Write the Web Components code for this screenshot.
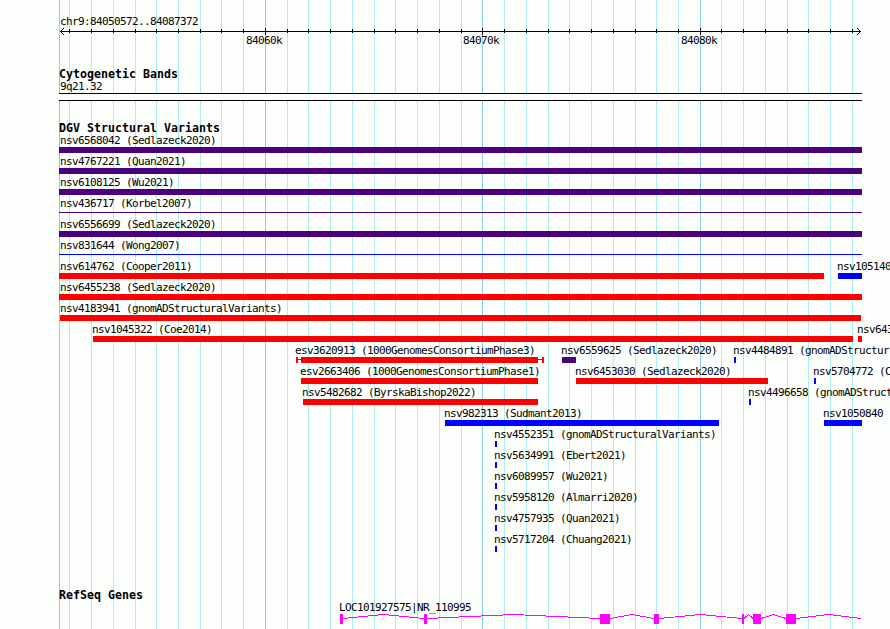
<!DOCTYPE html>
<html lang="en">
<head>
<meta charset="utf-8">
<title>chr9:84050572..84087372</title>
<style>
    body {
        margin: 0;
        background: #fdfffc;
        overflow: hidden;
    }
</style>
</head>
<body>
<genome-view>
    <genome-ruler slot="ruler" region="chr9:84050572..84087372"></genome-ruler>
    <genome-track heading="Cytogenetic Bands" style="height: 54px">
        <cyto-band name="9q21.32"></cyto-band>
    </genome-track>
    <genome-track id="variants" heading="DGV Structural Variants" style="height: 467px"></genome-track>
    <genome-track heading="RefSeq Genes">
        <gene-model name="LOC101927575|NR_110995"></gene-model>
    </genome-track>
</genome-view>
<script>
const LABEL_STYLE = `
    font: 11px/14px "DejaVu Sans Mono", "Liberation Mono", monospace;
    letter-spacing: -0.623px;
    white-space: nowrap;
    color: #000;
`;
const COLORS = { indigo: "#4b0082", red: "#ff0000", blue: "#0000ff" };
const MAJOR = [265, 482, 700];
const MINOR = [
    69, 91, 113, 135, 156, 178, 200, 221, 243, 287, 308, 330, 352, 374, 395,
    417, 439, 461, 504, 526, 548, 569, 591, 613, 635, 656, 678, 721, 743, 765,
    787, 808, 830, 852,
];

class GenomeView extends HTMLElement {
    constructor() {
        super();
        const line = (x, color) =>
            `<rect x="${x}" y="0" width="1" height="629" fill="${color}"/>`;
        this.attachShadow({ mode: "open" }).innerHTML = `
        <style>
            :host {
                display: grid;
                width: 890px;
                height: 629px;
                overflow: hidden;
            }
            svg, .tracks { grid-area: 1 / 1; }
            .tracks { display: flex; flex-direction: column; min-width: 0; z-index: 1; }
        </style>
        <svg width="890" height="629" shape-rendering="crispEdges">
            ${MINOR.map((x) => line(x, "#afeeee")).join("")}
            ${[59, ...MAJOR].map((x) => line(x, "#87ceeb")).join("")}
        </svg>
        <div class="tracks"><slot name="ruler"></slot><slot></slot></div>`;
    }
}

class GenomeRuler extends HTMLElement {
    connectedCallback() {
        const tick = (x, y, h) => `<rect x="${x}" y="${y}" width="1" height="${h}"/>`;
        this.attachShadow({ mode: "open" }).innerHTML = `
        <style>
            :host { display: flex; flex-direction: column; height: 67px; padding-top: 1px; box-sizing: border-box; ${LABEL_STYLE} }
            .region { padding: 14px 0 0 60px; height: 12px; }
            svg { display: block; height: 8px; flex: none; }
            .scale { display: grid; height: 12px; line-height: 12px; }
            .scale span { grid-area: 1 / 1; }
        </style>
        <div class="region">${this.getAttribute("region")}</div>
        <svg width="890" height="8" viewBox="0 27 890 8" shape-rendering="crispEdges">
            <rect x="60" y="31" width="801" height="1"/>
            ${MINOR.map((x) => tick(x, 29, 4)).join("")}
            ${MAJOR.map((x) => tick(x, 28, 7)).join("")}
            <path d="M60 31h1v1h-1zM61 30h1v3h-1zM62 29h1v1h-1zM62 33h1v1h-1zM63 28h1v1h-1zM63 34h1v1h-1z"/>
            <path d="M860 31h1v1h-1zM859 30h1v3h-1zM858 29h1v1h-1zM858 33h1v1h-1zM857 28h1v1h-1zM857 34h1v1h-1z"/>
        </svg>
        <div class="scale">
            ${["84060k", "84070k", "84080k"]
                .map((t, i) => `<span style="margin-left: ${[246, 463, 681][i]}px">${t}</span>`)
                .join("")}
        </div>`;
    }
}

class GenomeTrack extends HTMLElement {
    connectedCallback() {
        this.attachShadow({ mode: "open" }).innerHTML = `
        <style>
            :host { display: block; flex: none; }
            h2 {
                margin: 0;
                padding: 1px 0 0 59px;
                height: 12px;
                font: bold 11.6px/12px "DejaVu Sans Mono", "Liberation Mono", monospace;
                letter-spacing: 0.016px;
                white-space: nowrap;
            }
        </style>
        <h2>${this.getAttribute("heading")}</h2>
        <slot></slot>`;
    }
}

class CytoBand extends HTMLElement {
    connectedCallback() {
        this.attachShadow({ mode: "open" }).innerHTML = `
        <style>
            :host { display: block; ${LABEL_STYLE} }
            .name { padding-left: 60px; height: 13px; }
            .band {
                margin-left: 59px;
                width: 803px;
                height: 8px;
                box-sizing: border-box;
                border: solid #000;
                border-width: 1px 0;
                background: #fdfffc;
            }
        </style>
        <div class="name">${this.getAttribute("name")}</div>
        <div class="band"></div>`;
    }
}

class VariantRow extends HTMLElement {
    constructor() {
        super();
        this.attachShadow({ mode: "open" }).innerHTML = `
        <style>:host { display: grid; height: 21px; grid-template-columns: 890px; }</style>
        <slot></slot>`;
    }
}

class VariantFeature extends HTMLElement {
    connectedCallback() {
        const start = +this.getAttribute("start");
        const end = +this.getAttribute("end");
        const labelX = +this.getAttribute("label-x");
        const kind = this.getAttribute("kind");
        this.attachShadow({ mode: "open" }).innerHTML = `
        <style>
            :host { display: block; grid-area: 1 / 1; ${LABEL_STYLE} }
            .name { margin-left: ${labelX}px; height: 13px; }
            .glyph {
                display: flex;
                align-items: center;
                margin-left: ${start}px;
                width: ${end - start}px;
                height: 6px;
                color: ${COLORS[this.getAttribute("color")]};
            }
            .bar { flex: 1; height: 6px; background: currentColor; }
            .thin .bar { height: 1px; margin-bottom: 1px; }
            .cap { width: 2px; height: 6px; background: currentColor; }
            .stem { height: 1px; width: 3px; margin-bottom: 1px; background: currentColor; }
            .stem.right { width: 4px; }
        </style>
        <div class="name">${this.getAttribute("name")}</div>
        <div class="glyph ${kind}">
            ${kind === "range" ? '<i class="cap"></i><i class="stem"></i>' : ""}
            <i class="bar"></i>
            ${kind === "range" ? '<i class="stem right"></i><i class="cap"></i>' : ""}
        </div>`;
    }
}

class GeneModel extends HTMLElement {
    connectedCallback() {
        const exons = [[340, 343], [424, 427], [600, 610], [654, 659], [742, 744], [753, 761], [786, 796]];
        const introns = exons.map(([, end], i) => {
            const next = i + 1 < exons.length ? exons[i + 1][0] : 861;
            return `M${end} 4.5L${(end + next) / 2} 0.5L${next} 4.5`;
        });
        this.attachShadow({ mode: "open" }).innerHTML = `
        <style>
            :host { display: block; ${LABEL_STYLE} }
            .name { padding-left: 339px; height: 13px; }
            svg { display: block; }
        </style>
        <div class="name">${this.getAttribute("name")}</div>
        <svg width="890" height="10" fill="#ff00ff" shape-rendering="crispEdges">
            <path d="${introns.join("")}" fill="none" stroke="#ff00ff"/>
            ${exons.map(([a, b]) => `<rect x="${a}" width="${b - a}" height="10"/>`).join("")}
        </svg>`;
    }
}

// name, colour, bar start, bar end, label x, glyph kind
const ROWS = [
    [["nsv6568042 (Sedlazeck2020)", "indigo", 59, 862, 60]],
    [["nsv4767221 (Quan2021)", "indigo", 59, 862, 60]],
    [["nsv6108125 (Wu2021)", "indigo", 59, 862, 60]],
    [["nsv436717 (Korbel2007)", "indigo", 59, 862, 60, "thin"]],
    [["nsv6556699 (Sedlazeck2020)", "indigo", 59, 862, 60]],
    [["nsv831644 (Wong2007)", "blue", 59, 862, 60, "thin"]],
    [["nsv614762 (Cooper2011)", "red", 59, 824, 60], ["nsv105140", "blue", 838, 862, 837]],
    [["nsv6455238 (Sedlazeck2020)", "red", 59, 862, 60]],
    [["nsv4183941 (gnomADStructuralVariants)", "red", 60, 861, 60]],
    [["nsv1045322 (Coe2014)", "red", 93, 853, 92], ["nsv643", "red", 858, 862, 857]],
    [
        ["esv3620913 (1000GenomesConsortiumPhase3)", "red", 296, 544, 295, "range"],
        ["nsv6559625 (Sedlazeck2020)", "indigo", 562, 576, 561],
        ["nsv4484891 (gnomADStructur", "blue", 734, 736, 733],
    ],
    [
        ["esv2663406 (1000GenomesConsortiumPhase1)", "red", 301, 538, 300],
        ["nsv6453030 (Sedlazeck2020)", "red", 576, 768, 575],
        ["nsv5704772 (C", "blue", 814, 816, 813],
    ],
    [
        ["nsv5482682 (ByrskaBishop2022)", "red", 303, 538, 302],
        ["nsv4496658 (gnomADStruct", "blue", 749, 751, 748],
    ],
    [["nsv982313 (Sudmant2013)", "blue", 445, 719, 444], ["nsv1050840", "blue", 824, 862, 823]],
    [["nsv4552351 (gnomADStructuralVariants)", "blue", 495, 497, 494]],
    [["nsv5634991 (Ebert2021)", "blue", 495, 497, 494]],
    [["nsv6089957 (Wu2021)", "blue", 495, 497, 494]],
    [["nsv5958120 (Almarri2020)", "blue", 495, 497, 494]],
    [["nsv4757935 (Quan2021)", "blue", 495, 497, 494]],
    [["nsv5717204 (Chuang2021)", "blue", 495, 497, 494]],
];

document.getElementById("variants").innerHTML = ROWS.map(
    (row) => `<variant-row>${row
        .map(
            ([name, color, start, end, labelX, kind = "solid"]) =>
                `<variant-feature name="${name}" color="${color}" start="${start}" end="${end}" label-x="${labelX}" kind="${kind}"></variant-feature>`
        )
        .join("")}</variant-row>`
).join("");

customElements.define("genome-view", GenomeView);
customElements.define("genome-ruler", GenomeRuler);
customElements.define("genome-track", GenomeTrack);
customElements.define("cyto-band", CytoBand);
customElements.define("variant-row", VariantRow);
customElements.define("variant-feature", VariantFeature);
customElements.define("gene-model", GeneModel);
</script>
</body>
</html>
